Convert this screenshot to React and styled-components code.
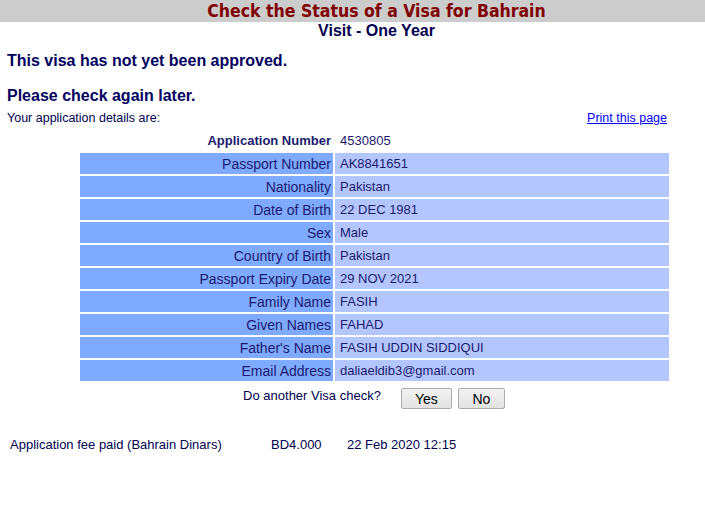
import React from 'react'
import styled, { createGlobalStyle } from 'styled-components'

const GlobalStyle = createGlobalStyle`
    body {
        margin: 0;
        background: #fff;
        font-family: "Liberation Sans", Arial, sans-serif;
        color: #000066;
    }
`

const Header = styled.div`
    background: #cccccc;
    height: 22px;
    padding-left: 48px;
    text-align: center;
`
const Title = styled.h1`
    margin: 0;
    font-family: "DejaVu Sans Condensed", "DejaVu Sans", sans-serif;
    font-stretch: condensed;
    font-size: 17.5px;
    line-height: 23px;
    font-weight: bold;
    color: #800000;
`
const SubTitle = styled.div`
    margin-top: 1px;
    padding-left: 48px;
    text-align: center;
    font-size: 16px;
    line-height: 16px;
    font-weight: bold;
    color: #000050;
`
const Message = styled.div`
    margin: ${p => p.$top}px 0 0 7px;
    font-size: 16px;
    line-height: 20px;
    font-weight: bold;
    color: #000060;
`
const DetailsBar = styled.div`
    display: flex;
    justify-content: space-between;
    margin: 4px 38px 0 7px;
    font-size: 12.5px;
    line-height: 16px;
    color: #000050;
`
const PrintLink = styled.a`
    color: #0000ff;
    text-decoration: underline;
    cursor: pointer;
`
const Details = styled.table`
    margin: 2px 0 0 78px;
    width: 593px;
    border-spacing: 2px;
    border-collapse: separate;
`
const Label = styled.td`
    width: 251px;
    height: 21px;
    padding: 0 2px 0 0;
    text-align: right;
    font-size: ${p => (p.$head ? 13 : 14)}px;
    font-weight: ${p => (p.$head ? 'bold' : 'normal')};
    background: ${p => (p.$head ? 'transparent' : '#7eaaff')};
    color: #1a1a6e;
`
const Value = styled.td`
    height: 21px;
    padding: 0 0 0 5px;
    font-size: 13px;
    background: ${p => (p.$head ? 'transparent' : '#b4c6ff')};
    color: #1a1a6e;
`
const CheckRow = styled.div`
    display: flex;
    justify-content: center;
    align-items: center;
    margin-top: 5px;
    padding-left: 49px;
    font-size: 13px;
    color: #000050;
`
const Question = styled.span`
    margin-right: 20px;
    margin-top: -6px;
`
const Button = styled.button`
    width: ${p => p.$w}px;
    height: 21px;
    margin-right: 6px;
    padding: 0;
    font-family: "Liberation Sans", Arial, sans-serif;
    font-size: 14px;
    color: #000;
    background: linear-gradient(#f2f2f2, #e3e3e3);
    border: 1px solid #acacac;
    border-radius: 2px;
`
const Fee = styled.div`
    display: grid;
    grid-template-columns: 261px 76px auto;
    margin: 28px 0 0 10px;
    font-size: 13px;
    line-height: 16px;
    color: #000050;
`

const rows = [
    ['Passport Number', 'AK8841651'],
    ['Nationality', 'Pakistan'],
    ['Date of Birth', '22 DEC 1981'],
    ['Sex', 'Male'],
    ['Country of Birth', 'Pakistan'],
    ['Passport Expiry Date', '29 NOV 2021'],
    ['Family Name', 'FASIH'],
    ['Given Names', 'FAHAD'],
    ["Father's Name", 'FASIH UDDIN SIDDIQUI'],
    ['Email Address', 'daliaeldib3@gmail.com'],
]

export default function App() {
    return (
        <>
            <GlobalStyle />
            <Header>
                <Title>Check the Status of a Visa for Bahrain</Title>
            </Header>
            <SubTitle>Visit - One Year</SubTitle>
            <Message $top={12}>This visa has not yet been approved.</Message>
            <Message $top={15}>Please check again later.</Message>
            <DetailsBar>
                <span>Your application details are:</span>
                <PrintLink>Print this page</PrintLink>
            </DetailsBar>
            <Details>
                <tbody>
                    <tr>
                        <Label $head>Application Number</Label>
                        <Value $head>4530805</Value>
                    </tr>
                    {rows.map(([k, v]) => (
                        <tr key={k}>
                            <Label>{k}</Label>
                            <Value>{v}</Value>
                        </tr>
                    ))}
                </tbody>
            </Details>
            <CheckRow>
                <Question>Do another Visa check?</Question>
                <Button $w={51}>Yes</Button>
                <Button $w={47}>No</Button>
            </CheckRow>
            <Fee>
                <span>Application fee paid (Bahrain Dinars)</span>
                <span>BD4.000</span>
                <span>22 Feb 2020 12:15</span>
            </Fee>
        </>
    )
}
